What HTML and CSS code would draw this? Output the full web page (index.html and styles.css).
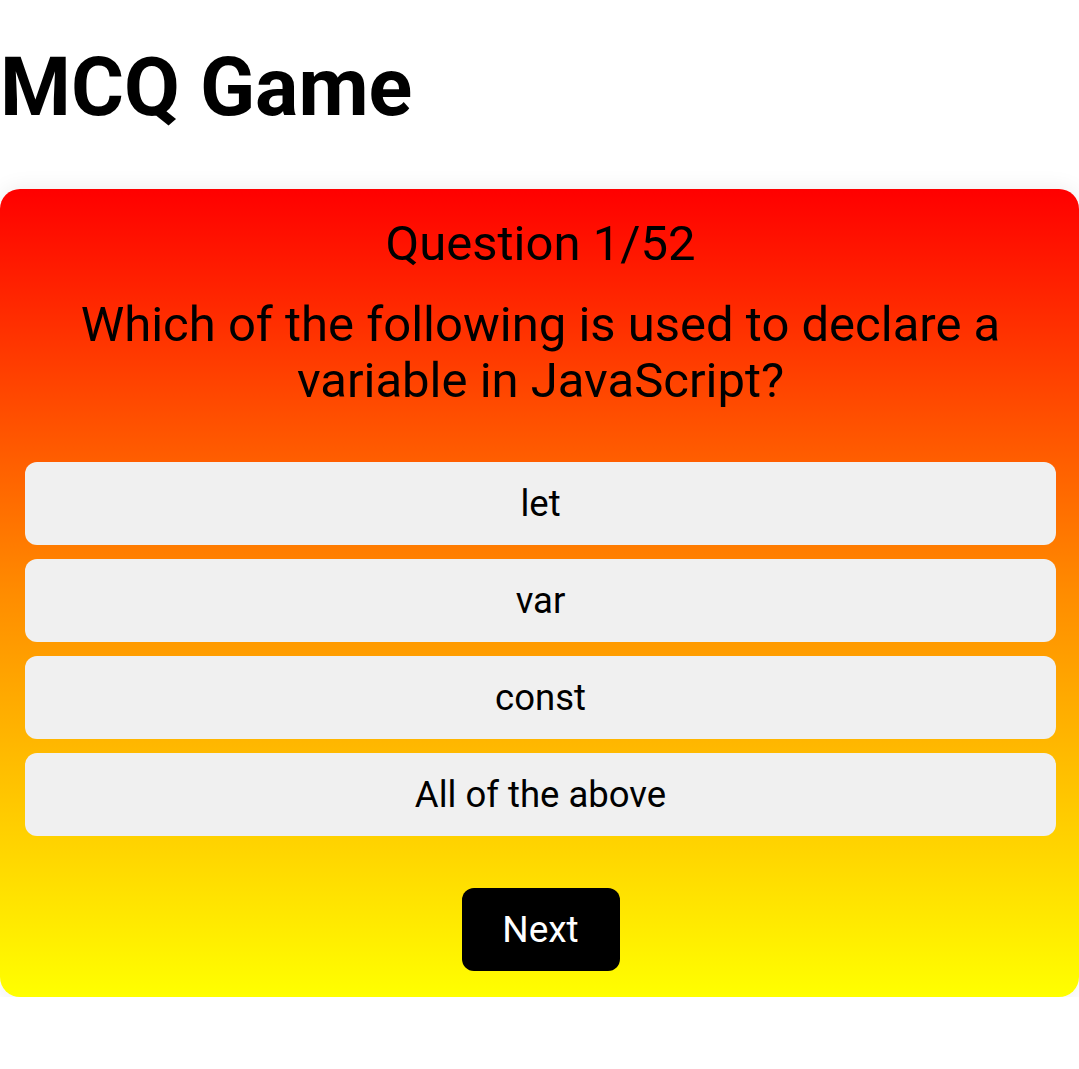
FILE: index.html
```html
<!DOCTYPE html>
<html lang="en">
<head>
<meta charset="utf-8">
<title>MCQ Game</title>
<link rel="stylesheet" href="styles.css">
</head>
<body>
<h1 class="title">MCQ Game</h1>
<div class="card">
  <div class="qnum">Question 1/52</div>
  <div class="qtext">Which of the following is used to declare a variable in JavaScript?</div>
  <div class="options">
    <button class="option">let</button>
    <button class="option">var</button>
    <button class="option">const</button>
    <button class="option">All of the above</button>
  </div>
  <div class="actions">
    <button class="next">Next</button>
  </div>
</div>
</body>
</html>
```

FILE: styles.css
```css
html, body {
  margin: 0;
  padding: 0;
  background: #ffffff;
}
body {
  font-family: Roboto, "Liberation Sans", sans-serif;
  color: #000;
  overflow: hidden;
}
.title {
  font-size: 81px;
  font-weight: 700;
  line-height: 1;
  margin: 47px 0 0 0;
  letter-spacing: 0;
}
.card {
  margin-top: 61px;
  width: 1079px;
  box-sizing: border-box;
  border-radius: 20px;
  background: linear-gradient(to bottom, #ff0000, #ff8c00 50%, #ffff00);
  box-shadow: 0 0 22px rgba(0, 0, 0, 0.08);
  padding: 25px 23px 26px 25px;
  text-align: center;
}
.qnum {
  font-size: 49px;
  line-height: 60px;
}
.qtext {
  font-size: 49px;
  line-height: 56px;
  padding: 0 30px;
  margin-top: 23px;
}
.options {
  display: flex;
  flex-direction: column;
  gap: 14px;
  margin-top: 53px;
}
.option {
  display: block;
  height: 83px;
  border: none;
  border-radius: 12px;
  background: #f0f0f0;
  font-family: Roboto, "Liberation Sans", sans-serif;
  font-size: 36.5px;
  color: #000;
  padding: 0;
}
.actions {
  display: flex;
  justify-content: center;
  margin-top: 52px;
}
.next {
  width: 158px;
  height: 83px;
  border: none;
  border-radius: 12px;
  background: #000;
  color: #fff;
  font-family: Roboto, "Liberation Sans", sans-serif;
  font-size: 37px;
  padding: 0;
}
```
